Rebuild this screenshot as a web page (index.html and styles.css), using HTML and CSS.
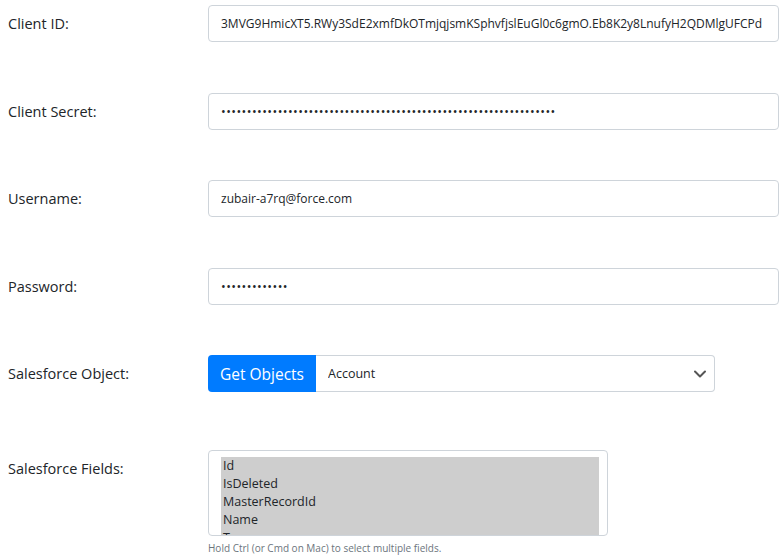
FILE: index.html
```html
<!DOCTYPE html>
<html lang="en">
<head>
    <meta charset="UTF-8">
    <title>Salesforce Export</title>
    <link rel="stylesheet" href="styles.css">
</head>
<body>
    <form class="sf-form">
        <div class="form-row">
            <label for="clientId">Client ID:</label>
            <input type="text" id="clientId" class="form-control" value="3MVG9HmicXT5.RWy3SdE2xmfDkOTmjqjsmKSphvfjslEuGl0c6gmO.Eb8K2y8LnufyH2QDMlgUFCPd">
        </div>

        <div class="form-row">
            <label for="clientSecret">Client Secret:</label>
            <input type="password" id="clientSecret" class="form-control" value="AAAAAAAAAAAAAAAAAAAAAAAAAAAAAAAAAAAAAAAAAAAAAAAAAAAAAAAAAAAAAAAAA">
        </div>

        <div class="form-row">
            <label for="username">Username:</label>
            <input type="text" id="username" class="form-control" value="zubair-a7rq@force.com">
        </div>

        <div class="form-row">
            <label for="password">Password:</label>
            <input type="password" id="password" class="form-control" value="AAAAAAAAAAAAA">
        </div>

        <div class="form-row">
            <label for="sfObject">Salesforce Object:</label>
            <div class="input-group">
                <button type="button" class="btn-primary">Get Objects</button>
                <div class="select-wrap">
                    <select id="sfObject" class="form-select">
                        <option>Account</option>
                        <option>Contact</option>
                        <option>Opportunity</option>
                    </select>
                    <svg class="chevron" width="12" height="8" viewBox="0 0 12 8"><path d="M1 1.5l5 5 5-5" fill="none" stroke="#555" stroke-width="2" stroke-linecap="round" stroke-linejoin="round"/></svg>
                </div>
            </div>
        </div>

        <div class="form-row fields-row">
            <label for="sfFields">Salesforce Fields:</label>
            <div>
                <div class="multi-select" id="sfFields">
                    <div class="option">Id</div>
                    <div class="option">IsDeleted</div>
                    <div class="option">MasterRecordId</div>
                    <div class="option">Name</div>
                    <div class="option">Type</div>
                </div>
                <small class="help-text">Hold Ctrl (or Cmd on Mac) to select multiple fields.</small>
            </div>
        </div>
    </form>
</body>
</html>
```

FILE: styles.css
```css
/* reset */
* {
    margin: 0;
    padding: 0;
    box-sizing: border-box;
}

html, body {
    height: 100%;
    overflow: hidden;
}

body {
    font-family: 'Open Sans', 'Noto Sans', sans-serif;
    color: #212529;
    background: #fff;
}

.sf-form {
    padding: 5px 5px 0 8px;
}

/* one label + control per row */
.form-row {
    display: grid;
    grid-template-columns: 200px 1fr;
    margin-bottom: 50.5px;
}

.form-row label {
    padding-top: 7px;
    font-size: 14.5px;
    line-height: 24px;
}

.form-control {
    width: 100%;
    height: 37px;
    padding: 0 12px;
    font-family: inherit;
    font-size: 12px;
    color: #212529;
    border: 1px solid #ced4da;
    border-radius: 4px;
    outline: none;
}

input[type="password"] {
    font-size: 12.5px;
    letter-spacing: 0.45px;
}

/* object picker */
.input-group {
    display: flex;
    width: 507px;
    height: 37px;
}

.btn-primary {
    width: 108px;
    background: #007bff;
    color: #fff;
    border: none;
    border-radius: 4px 0 0 4px;
    font-family: inherit;
    font-size: 15.5px;
}

.select-wrap {
    flex: 1;
    position: relative;
}

.form-select {
    appearance: none;
    width: 100%;
    height: 100%;
    padding: 0 12px;
    font-family: inherit;
    font-size: 12.5px;
    color: #212529;
    background: #fff;
    border: 1px solid #ced4da;
    border-left: none;
    border-radius: 0 4px 4px 0;
    outline: none;
}

.chevron {
    position: absolute;
    right: 9px;
    top: 15px;
    pointer-events: none;
}

/* field list */
.fields-row {
    margin-top: 58px;
    margin-bottom: 0;
}

.multi-select {
    width: 400px;
    height: 86px;
    padding: 6px 8px 0 12px;
    border: 1px solid #ced4da;
    border-radius: 4px;
    overflow: hidden;
}

.option {
    background: #cecece;
    padding-left: 2px;
    font-size: 12.5px;
    line-height: 18px;
}

.help-text {
    display: block;
    margin-top: 5px;
    font-size: 10px;
    color: #6c757d;
}
```
